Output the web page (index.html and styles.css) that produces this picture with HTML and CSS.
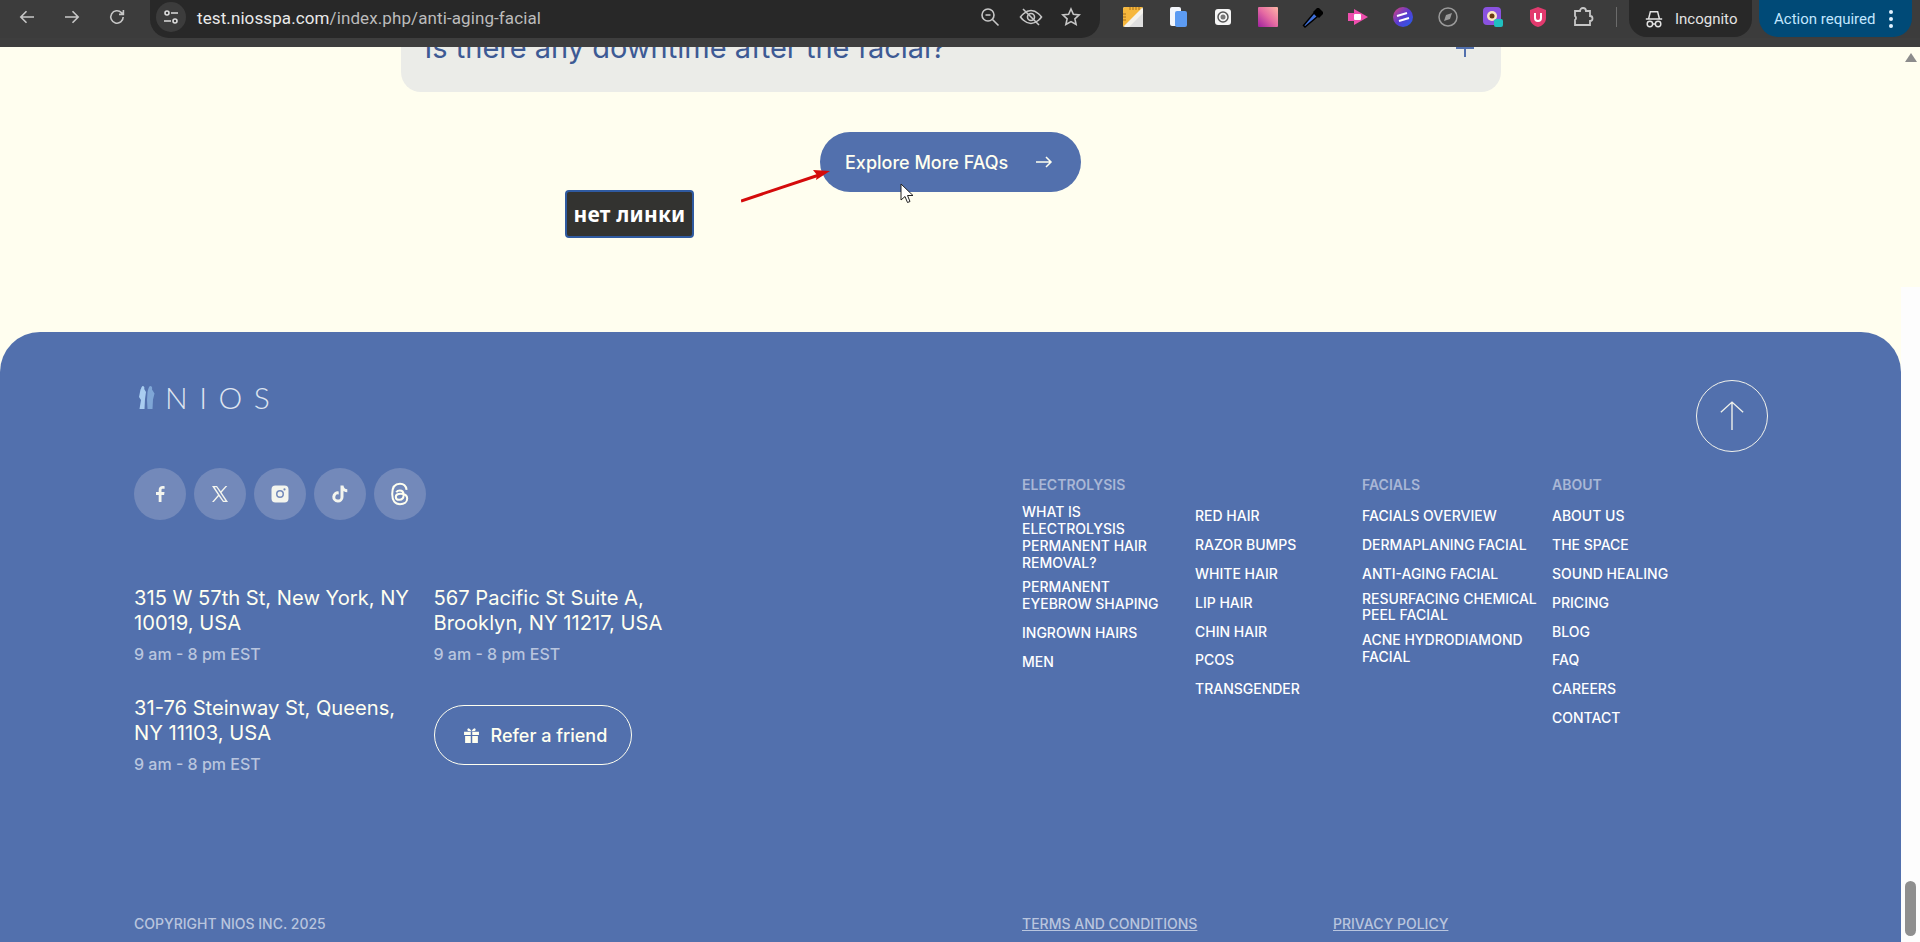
FILE: index.html
```html
<!DOCTYPE html>
<html lang="en">
<head>
<meta charset="utf-8">
<title>Anti-aging facial</title>
<link rel="stylesheet" href="styles.css">
</head>
<body>
<header class="chrome">
  <div class="nav-btns">
    <svg class="ico" viewBox="0 0 18 18"><path d="M16 9H3M8.5 3.2 2.8 9l5.7 5.8"/></svg>
    <svg class="ico" viewBox="0 0 18 18"><path d="M2 9h13M9.5 3.2 15.2 9l-5.7 5.8"/></svg>
    <svg class="ico" viewBox="0 0 18 18"><path d="M15.2 9a6.2 6.2 0 1 1-1.8-4.4L15.2 6.4M15.4 2v4.4H11"/></svg>
  </div>
  <div class="omnibox">
    <span class="tune"><svg viewBox="0 0 18 18"><circle cx="5" cy="5" r="2"/><path d="M9 5h7M2 13h7"/><circle cx="13" cy="13" r="2"/></svg></span>
    <span class="url"><b>test.niosspa.com</b>/index.php/anti-aging-facial</span>
    <span class="omni-actions">
      <svg class="ico" viewBox="0 0 20 20"><circle cx="8" cy="8" r="6"/><path d="M5.500 8h5M12.500 12.500l6 6"/></svg>
      <svg class="ico ico-wide" viewBox="0 0 24 20"><path d="M1.500 10S6 3.500 12 3.500 22.500 10 22.500 10 18 16.500 12 16.500 1.500 10 1.500 10Z"/><circle cx="12" cy="10" r="3.500"/><path d="M4 2l16 16"/></svg>
      <svg class="ico" viewBox="0 0 20 20"><path d="m10 2 2.400 5.300 5.800.6-4.300 3.900 1.200 5.700L10 14.600l-5.100 2.900 1.200-5.700L1.800 7.900l5.800-.6Z"/></svg>
    </span>
  </div>
  <div class="extensions">
    <svg viewBox="0 0 22 22"><rect x="1" y="1" width="20" height="20" rx="2" fill="#f4f2ec"/><path d="M1 3a2 2 0 0 1 2-2h18L1 21Z" fill="#f6b73c"/><path d="M21 21H7L21 7Z" fill="#dfdfdf"/><path d="M8 1v3M11 1v3M14 1v3M17 1v3M1 8h3M1 11h3M1 14h3" stroke="#a8701c" stroke-width="1"/></svg>
    <svg viewBox="0 0 22 22"><rect x="3" y="1" width="11" height="19" rx="2" fill="#f4f6fb"/><rect x="8" y="5" width="12" height="16" rx="2" fill="#5c9bf2"/></svg>
    <svg viewBox="0 0 22 22"><rect x="3" y="3" width="16" height="16" rx="3" fill="#f5f5f5"/><circle cx="11" cy="11" r="5" fill="none" stroke="#555" stroke-width="1.500"/><circle cx="11" cy="11" r="2.500" fill="#777"/></svg>
    <svg viewBox="0 0 22 22"><defs><linearGradient id="pk" x1="1" y1="0" x2="0" y2="1"><stop offset="0" stop-color="#fdb7a6"/><stop offset=".5" stop-color="#e66ba2"/><stop offset="1" stop-color="#a01fa0"/></linearGradient></defs><rect x="1" y="1" width="20" height="20" rx="1" fill="url(#pk)"/></svg>
    <svg viewBox="0 0 22 22"><path d="M3 21 1.500 19.500 12 7l3.500 3.500Z" fill="#3f6fd8" stroke="#000" stroke-width="1.500"/><path d="m11 6 4-4 2 0 4 4 0 2-4 4Z" fill="#000"/></svg>
    <svg viewBox="0 0 22 22"><path d="M1 7h6V3l14 8-14 8v-4H1Z" fill="#ee4fae"/><rect x="7" y="8" width="7" height="6" rx="1" fill="#fff"/></svg>
    <svg viewBox="0 0 22 22"><defs><linearGradient id="ms" x1="0" y1="0" x2="1" y2="1"><stop offset="0" stop-color="#e0437a"/><stop offset=".5" stop-color="#5a3bd0"/><stop offset="1" stop-color="#2060ee"/></linearGradient></defs><circle cx="11" cy="11" r="10" fill="url(#ms)"/><path d="m5 10 10-3M7 15l10-3" stroke="#fff" stroke-width="2" fill="none"/></svg>
    <svg viewBox="0 0 22 22"><circle cx="11" cy="11" r="9" fill="none" stroke="#9a9a9a" stroke-width="1.500"/><path d="m7 15 2-6 6-2-2 6Z" fill="#9a9a9a"/></svg>
    <svg viewBox="0 0 22 22"><rect x="1" y="1" width="18" height="18" rx="4" fill="#8a52e0"/><circle cx="10" cy="10" r="5" fill="#fde7c0"/><circle cx="10" cy="10" r="2.500" fill="#6a3a10"/><rect x="12" y="13" width="9" height="8" rx="2" fill="#20c0c0"/></svg>
    <svg viewBox="0 0 22 22"><path d="M11 1 19 4v8c0 5-4 8-8 9-4-1-8-4-8-9V4Z" fill="#e23a6e"/><path d="M8 7v5a3 3 0 0 0 6 0V7" fill="none" stroke="#fff" stroke-width="2"/></svg>
    <svg class="puzzle" viewBox="0 0 22 22"><path d="M3 5h5a3 3 0 0 1 6 0h4v5a2.500 2.500 0 0 1 0 5v4H3v-5a2.500 2.500 0 0 0 0-4Z"/></svg>
  </div>
  <span class="sep"></span>
  <div class="incognito">
    <svg viewBox="0 0 22 22"><path d="M2 11h18M5 11l2-8h8l2 8"/><circle cx="6.500" cy="16.500" r="3"/><circle cx="15.500" cy="16.500" r="3"/><path d="M9.500 16.500h3"/></svg>
    <span>Incognito</span>
  </div>
  <div class="action"><span>Action required</span><i class="dots"><em></em><em></em><em></em></i></div>
</header>

<div class="viewport">
  <main class="page">
    <section class="faq-area">
      <div class="faq-card">
        <h3 class="faq-q">Is there any downtime after the facial?</h3>
        <svg class="faq-plus" viewBox="0 0 18 18"><path d="M9 0v18M0 9h18"/></svg>
      </div>
      <a class="explore">Explore More FAQs
        <svg viewBox="0 0 18 14"><path d="M1 7h15M11 2l5 5-5 5"/></svg>
      </a>
      <div class="note">нет линки</div>
      <svg class="note-arrow" viewBox="0 0 100 40"><path d="M0 34 78 8" stroke="#d40b0b" stroke-width="3" fill="none"/><path d="M89 4 72 3 76 8 75 13Z" fill="#d40b0b"/></svg>
      <svg class="pointer" viewBox="0 0 14 22"><path d="M1 1v16l4-3.500 2.500 6 2.500-1-2.500-6H13Z" fill="#fff" stroke="#222" stroke-width="1"/></svg>
    </section>

    <footer class="footer">
      <div class="foot-top">
        <div class="logo">
          <svg viewBox="0 0 17 23"><path d="M4.500 0c1.800 0 2.200 1.500 1.700 3L8 6 7 13l-.5 10H1.500L3 14 1 11l1.500-7.500C3.300 3 3 1 4.500 0Z" fill="#a9cdf0"/><path d="M12 0c2 0 2.500 1.500 2 3.500l2.500 4-1.500 6-.5 9.500H9.500L9 14l.5-8C10 4 10.500 1 12 0Z" fill="#7fa6d6"/></svg>
          <span>NIOS</span>
        </div>
        <a class="to-top"><svg viewBox="0 0 28 34"><path d="M14 32V2M2 13 14 2l12 11"/></svg></a>
      </div>

      <div class="foot-main">
        <div class="foot-left">
          <div class="socials">
            <a class="soc"><svg viewBox="0 0 20 20"><path d="M11.500 18v-7h2.600l.4-3h-3V6.200c0-.9.300-1.400 1.500-1.400h1.600V2.200C14.300 2.100 13.500 2 12.600 2 10.300 2 8.700 3.400 8.700 5.900V8H6v3h2.700v7Z"/></svg></a>
            <a class="soc"><svg viewBox="0 0 20 20"><path d="M2 2h5l3.800 5.200L15.500 2h1.800l-5.700 6.400L18 18h-5l-4.200-5.700L3.800 18H2l6-6.900ZM4.600 3.300l9 13.400h1.800l-9-13.400Z"/></svg></a>
            <a class="soc"><svg viewBox="0 0 20 20"><path fill-rule="evenodd" d="M5.500 1.500h9a4 4 0 0 1 4 4v9a4 4 0 0 1-4 4h-9a4 4 0 0 1-4-4v-9a4 4 0 0 1 4-4ZM10 6a4 4 0 1 0 0 8 4 4 0 0 0 0-8Zm0 1.500a2.500 2.500 0 1 1 0 5 2.500 2.500 0 0 1 0-5Zm4.500-3.200a1.100 1.100 0 1 0 0 2.200 1.100 1.100 0 0 0 0-2.200Z"/></svg></a>
            <a class="soc"><svg viewBox="0 0 20 20"><path d="M10.500 1.500h3c.2 2.200 1.600 3.600 3.800 3.800v3c-1.400 0-2.700-.4-3.800-1.200v5.800a5.600 5.600 0 1 1-4.800-5.500v3.100a2.600 2.600 0 1 0 1.800 2.400Z"/></svg></a>
            <a class="soc soc-line"><svg viewBox="0 0 20 20"><path d="M15.500 6.500C15 3.200 13 1.500 10 1.500 6 1.500 3.500 4.500 3.500 10s2.500 8.500 6.500 8.500c3.500 0 6-2 6-4.700 0-2.600-2.200-4-5.500-4-2.400 0-4 1-4 2.600 0 1.500 1.300 2.400 3 2.400 2.200 0 3.500-1.400 3.500-4 0-2.200-1.100-3.700-3.200-3.700-1.300 0-2.300.5-2.900 1.400"/></svg></a>
          </div>
          <div class="addresses">
            <div class="addr"><p>315 W 57th St, New York, NY 10019, USA</p><small>9 am - 8 pm EST</small></div>
            <div class="addr"><p>567 Pacific St Suite A, Brooklyn, NY 11217, USA</p><small>9 am - 8 pm EST</small></div>
            <div class="addr"><p>31-76 Steinway St, Queens, NY 11103, USA</p><small>9 am - 8 pm EST</small></div>
            <a class="refer"><svg viewBox="0 0 16 16"><path d="M1 4.500h6.300v3H1ZM8.700 4.500H15v3H8.700ZM2 8.500h5.300V15H2ZM8.700 8.500H14V15H8.700ZM8 4 5 3.800C3.600 3.500 3.800 1 5.500 1.300 6.800 1.500 8 4 8 4Zm0 0 3-.2c1.400-.3 1.200-2.800-.5-2.500C9.200 1.500 8 4 8 4Z"/></svg>Refer a friend</a>
          </div>
        </div>
        <nav class="foot-nav">
          <div class="col col-a">
            <h4>ELECTROLYSIS</h4>
            <ul>
              <li>WHAT IS ELECTROLYSIS PERMANENT HAIR REMOVAL?</li>
              <li class="m7">PERMANENT EYEBROW SHAPING</li>
              <li class="m6">INGROWN HAIRS</li>
              <li>MEN</li>
            </ul>
          </div>
          <div class="col col-b">
            <h4 class="blank">&nbsp;</h4>
            <ul class="tight">
              <li>RED HAIR</li><li>RAZOR BUMPS</li><li>WHITE HAIR</li><li>LIP HAIR</li><li>CHIN HAIR</li><li>PCOS</li><li>TRANSGENDER</li>
            </ul>
          </div>
          <div class="col col-c">
            <h4>FACIALS</h4>
            <ul>
              <li>FACIALS OVERVIEW</li><li>DERMAPLANING FACIAL</li><li>ANTI-AGING FACIAL</li>
              <li class="m3 lh16">RESURFACING CHEMICAL PEEL FACIAL</li>
              <li class="m8">ACNE HYDRODIAMOND FACIAL</li>
            </ul>
          </div>
          <div class="col col-d">
            <h4>ABOUT</h4>
            <ul class="tight">
              <li>ABOUT US</li><li>THE SPACE</li><li>SOUND HEALING</li><li>PRICING</li><li>BLOG</li><li>FAQ</li><li>CAREERS</li><li>CONTACT</li>
            </ul>
          </div>
        </nav>
      </div>

      <div class="foot-bottom">
        <span class="copy">COPYRIGHT NIOS INC. 2025</span>
        <a class="legal legal-terms">TERMS AND CONDITIONS</a>
        <a class="legal">PRIVACY POLICY</a>
      </div>
    </footer>
  </main>
  <aside class="scrollbar">
    <i class="sb-up"></i>
    <i class="sb-thumb"></i>
  </aside>
</div>
</body>
</html>
```
FILE: styles.css
```css
* { box-sizing: border-box; }
html, body { margin: 0; height: 100%; }
body {
  width: 1920px; height: 942px; overflow: hidden;
  display: flex; flex-direction: column;
  font-family: Inter, "Liberation Sans", sans-serif;
  background: #fffeef;
}

/* browser chrome */
.chrome {
  height: 47px; flex: none; display: flex; align-items: flex-start;
  background: #3c3c3c; box-shadow: inset 0 -9px 0 #3e3e3e;
  color: #e3e3e3; font-family: Roboto, "Liberation Sans", sans-serif;
}
.ico { fill: none; stroke: #c7c7c7; stroke-width: 1.6; }
.nav-btns { display: flex; gap: 27px; padding: 8px 0 0 18px; width: 150px; flex: none; }
.nav-btns .ico { width: 18px; height: 18px; }
.omnibox {
  width: 950px; height: 38px; flex: none; display: flex; align-items: center;
  background: #282828; border-radius: 0 0 19px 19px;
  padding: 0 19px 0 6px;
}
.tune {
  width: 30px; height: 30px; border-radius: 50%; background: #3c3c3c;
  display: flex; align-items: center; justify-content: center; flex: none; margin-top: -4px;
}
.tune svg { width: 18px; height: 18px; fill: none; stroke: #dcdcdc; stroke-width: 1.6; }
.url { margin-left: 11px; font-size: 17px; letter-spacing: .1px; color: #bcbcbc; margin-top: -3px; }
.url b { font-weight: 400; color: #eaeaea; }
.omni-actions { margin-left: auto; display: flex; align-items: center; gap: 18.500px; margin-top: -4px; }
.omni-actions .ico { width: 20px; height: 20px; }
.omni-actions .ico-wide { width: 24px; }
.extensions { display: flex; gap: 23px; margin-left: 22px; padding-top: 6px; flex: none; }
.extensions svg { width: 22px; height: 22px; flex: none; }
.puzzle { fill: none; stroke: #c7c7c7; stroke-width: 1.800; }
.sep { width: 1px; height: 20px; background: #6b6b6b; margin: 7px 12px 0 22px; flex: none; }
.incognito {
  width: 123px; height: 37px; flex: none; border-radius: 0 0 18px 18px;
  background: #282828; display: flex; align-items: center; gap: 11px;
  padding-left: 15px; font-size: 15px; color: #e3e3e3;
}
.incognito svg { width: 20px; height: 20px; fill: none; stroke: #e3e3e3; stroke-width: 1.600; }
.action {
  width: 153px; height: 37px; flex: none; margin-left: 7px; border-radius: 0 0 19px 19px;
  background: #004a77; color: #c2e7ff; font-size: 15px;
  display: flex; align-items: center; padding-left: 15px; gap: 14px;
}
.dots { display: flex; flex-direction: column; gap: 3px; }
.dots em { width: 4px; height: 4px; border-radius: 50%; background: #e2f2ff; display: block; }

/* viewport */
.viewport { flex: 1; display: flex; min-height: 0; background: #fffeef; }
.page { width: 1901px; flex: none; display: flex; flex-direction: column; overflow: hidden; }
.scrollbar { width: 19px; flex: none; display: flex; flex-direction: column; align-items: center; background: linear-gradient(#fffeef 240px, #fdfdfd 240px); }
.sb-up { width: 0; height: 0; border: 6px solid transparent; border-top: 0; border-bottom: 9px solid #8c8c8c; margin-top: 6px; }
.sb-thumb { width: 11px; height: 55px; border-radius: 6px; background: #8f8f8f; margin-top: auto; margin-bottom: 6px; }

/* faq */
.faq-area { height: 285px; flex: none; display: flex; flex-direction: column; align-items: center; position: relative; }
.faq-card {
  width: 1100px; height: 45px; flex: none; background: #ebece8; border-radius: 0 0 20px 20px;
  padding: 0 24px; display: flex; justify-content: space-between; overflow: hidden; position: relative;
}
.faq-q { margin: -17px 0 0; font-size: 29px; line-height: 36px; font-weight: 400; color: #3d5a94; white-space: nowrap; }
.faq-plus { position: absolute; left: 1055px; top: -8px; width: 18px; height: 18px; fill: none; stroke: #5270ad; stroke-width: 2; }
.explore {
  margin-top: 40px; width: 261px; height: 60px; flex: none; border-radius: 30px;
  background: #5270ad; color: #fffff0; font-size: 18px; font-weight: 500;
  display: flex; align-items: center; padding: 0 28px 0 25px; justify-content: space-between;
}
.explore svg { width: 18px; height: 14px; fill: none; stroke: #fffff0; stroke-width: 1.500; }
.note {
  position: absolute; left: 565px; top: 143px; width: 129px; height: 48px;
  background: #333330; border: 2px solid #2f5aa0; border-radius: 4px;
  color: #fff; font: 700 21px/44px "Noto Sans", sans-serif; letter-spacing: .2px; text-align: center;
}
.note-arrow { position: absolute; left: 741px; top: 120px; width: 100px; height: 40px; }
.pointer { position: absolute; left: 900px; top: 136px; width: 14px; height: 22px; }

/* footer */
.footer {
  flex: 1; background: #5270ad; border-radius: 40px 40px 0 0; color: #fffff0;
  display: flex; flex-direction: column; padding: 48px 133px 10px 134px;
}
.foot-top { display: flex; justify-content: space-between; align-items: flex-start; height: 71px; flex: none; }
.logo { display: flex; align-items: center; gap: 10px; margin: 6px 0 0 4px; height: 23px; }
.logo svg { width: 17px; height: 23px; }
.logo span { font-size: 30px; font-weight: 300; letter-spacing: 11.500px; color: #dfe5f0; line-height: 23px; font-family: Lato, Inter, sans-serif; }
.to-top { width: 72px; height: 72px; border: 1px solid #f3f3ec; border-radius: 50%; display: flex; align-items: center; justify-content: center; }
.to-top svg { width: 26px; height: 32px; fill: none; stroke: #eef0ea; stroke-width: 1.500; }

.foot-main { display: flex; margin-top: 17px; flex: none; }
.foot-left { width: 888px; flex: none; }
.socials { display: flex; gap: 8px; }
.soc { width: 52px; height: 52px; border-radius: 50%; background: #7389ba; display: flex; align-items: center; justify-content: center; }
.soc svg { width: 20px; height: 20px; fill: #f4f5ee; }
.soc-line svg { width: 24px; height: 24px; fill: none; stroke: #fffff0; stroke-width: 1.700; }
.addresses { display: grid; grid-template-columns: 299.500px 270px; row-gap: 31px; margin-top: 65px; }
.addr p { margin: 0; font-size: 20.150px; line-height: 25px; width: 280px; }
.addr:nth-child(2) p { width: 260px; }
.addr small { display: block; margin-top: 9px; font-size: 16px; line-height: 20px; font-weight: 500; color: #b9c5de; }
.refer {
  width: 198px; height: 60px; border: 1px solid #fffff0; border-radius: 30px; margin-top: 10px;
  display: flex; align-items: center; gap: 11px; padding-left: 28px;
  font-size: 18px; font-weight: 500;
}
.refer svg { width: 17px; height: 17px; fill: #fffff0; }

.foot-nav { display: flex; padding-top: 8px; font-size: 14px; font-weight: 500; line-height: 17px; }
.col h4 { margin: 0 0 8px; font-size: 14px; font-weight: 600; line-height: 17px; color: #a9b7d6; }
.col ul { list-style: none; margin: 0; padding: 0; }
.col li { min-height: 29px; display: flex; align-items: center; color: #fff; }
.col .tight li { min-height: 28.900px; }
.col-a { width: 173px; } .col-a ul { padding-top: 2px; } .col-a li { width: 145px; }
.col-b { width: 167px; }
.col-c { width: 190px; } .col-c li { width: 180px; }
.col-d { width: 140px; }
.col .m3 { margin-top: 3px; }
.col .m6 { margin-top: 6px; }
.col .m7 { margin-top: 7px; }
.col .m8 { margin-top: 8px; }
.col .lh16 { line-height: 16px; }

.foot-bottom { margin-top: auto; display: flex; font-size: 14px; font-weight: 500; line-height: 17px; color: #b9c5de; }
.copy { width: 888px; flex: none; }
.legal { text-decoration: underline; }
.legal-terms { width: 311px; flex: none; }
```
